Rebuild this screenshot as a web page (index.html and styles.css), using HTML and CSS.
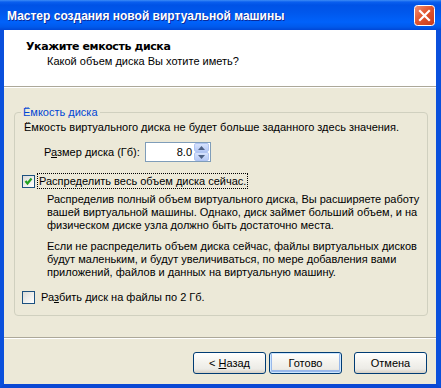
FILE: index.html
```html
<!DOCTYPE html>
<html lang="ru">
<head>
    <meta charset="UTF-8">
    <title>Мастер создания новой виртуальной машины</title>
    <link rel="stylesheet" href="styles.css">
</head>
<body>
    <div class="window">
        <div class="titlebar">
            <span class="title">Мастер создания новой виртуальной машины</span>
            <span class="close">
                <svg width="21" height="21" viewBox="0 0 21 21">
                    <defs>
                        <linearGradient id="closeBg" x1="0" y1="0" x2="1" y2="1">
                            <stop offset="0" stop-color="#F0937A"/>
                            <stop offset="0.45" stop-color="#E2572F"/>
                            <stop offset="1" stop-color="#C6391A"/>
                        </linearGradient>
                    </defs>
                    <rect x="0.5" y="0.5" width="20" height="20" rx="3" fill="url(#closeBg)" stroke="#FFFFFF"/>
                    <path d="M6 6 L15 15 M15 6 L6 15" stroke="#FFFFFF" stroke-width="2.2" stroke-linecap="square"/>
                </svg>
            </span>
        </div>

        <div class="frame">
            <div class="header">
                <div class="header-title">Укажите емкость диска</div>
                <div class="header-sub">Какой объем диска Вы хотите иметь?</div>
            </div>

            <div class="content">
                <fieldset class="group">
                    <legend>Ёмкость диска</legend>
                    <p class="limit">Ёмкость виртуального диска не будет больше заданного здесь значения.</p>

                    <div class="size-row">
                        <span class="size-label">Р<u>а</u>змер диска (Гб):</span>
                        <div class="spin">
                            <span class="spin-value">8.0</span>
                            <div class="spin-buttons">
                                <span class="spin-btn">
                                    <svg width="7" height="4" viewBox="0 0 7 4"><path d="M0 4 L3.5 0 L7 4 Z" fill="#4D6185"/></svg>
                                </span>
                                <span class="spin-btn">
                                    <svg width="7" height="4" viewBox="0 0 7 4"><path d="M0 0 L3.5 4 L7 0 Z" fill="#4D6185"/></svg>
                                </span>
                            </div>
                        </div>
                    </div>

                    <div class="check-row first">
                        <span class="checkbox">
                            <svg width="11" height="11" viewBox="0 0 11 11"><path d="M2.5 5 L4.5 7.5 L8.5 2.5" fill="none" stroke="#21A121" stroke-width="2.2"/></svg>
                        </span>
                        <span class="check-label focused">Распределить весь объем диска сейчас.</span>
                    </div>

                    <p class="note">Распределив полный объем виртуального диска, Вы расширяете работу<br>вашей виртуальной машины. Однако, диск займет больший объем, и на<br>физическом диске узла должно быть достаточно места.</p>
                    <p class="note second">Если не распределить объем диска сейчас, файлы виртуальных дисков<br>будут маленьким, и будут увеличиваться, по мере добавления вами<br>приложений, файлов и данных на виртуальную машину.</p>

                    <div class="check-row last">
                        <span class="checkbox"></span>
                        <span class="check-label">Ра<u>з</u>бить диск на файлы по 2 Гб.</span>
                    </div>
                </fieldset>
            </div>

            <div class="footer">
                <button class="btn">&lt; <u>Н</u>азад</button>
                <button class="btn default">Готово</button>
                <button class="btn cancel">Отмена</button>
            </div>
        </div>
    </div>
</body>
</html>
```

FILE: styles.css
```css
body {
    margin: 0;
    background: #ffffff;
    font-family: "Liberation Sans", "DejaVu Sans", sans-serif;
    font-size: 11px;
    color: #000;
}

.window {
    width: 441px;
    height: 388px;
    display: flex;
    flex-direction: column;
}

.titlebar {
    height: 30px;
    display: flex;
    align-items: center;
    justify-content: space-between;
    padding: 0 6px 0 7px;
    background: linear-gradient(to bottom,
        #3D8CF5 0px, #0A5FEF 2px, #0052E6 5px, #0057EC 12px,
        #0062FB 22px, #0059EB 27px, #0047D6 30px);
    color: #fff;
}

.title {
    font-size: 12px;
    font-weight: bold;
    text-shadow: 1px 1px 0 #0A2A9A;
    padding-top: 1px;
}

.close {
    display: flex;
    width: 21px;
    height: 21px;
}

.frame {
    flex: 1;
    display: flex;
    flex-direction: column;
    background: #ECE9D8;
    border-left: 4px solid #0A50DC;
    border-right: 5px solid #0A50DC;
    border-bottom: 4px solid #0A48D4;
}

.header {
    height: 57px;
    padding: 10px 0 0 22px;
    box-sizing: border-box;
    background: #fff;
    border-bottom: 1px solid #ACA899;
    box-shadow: 0 1px 0 #fff;
    line-height: 13px;
}

.header-title {
    font-family: "DejaVu Sans", sans-serif;
    font-weight: bold;
    letter-spacing: -0.4px;
}

.header-sub {
    margin: 2px 0 0 21px;
}

.content {
    padding: 19px 11px 0 10px;
}

.group {
    margin: 0;
    padding: 2px 8px 10px 7px;
    border: 1px solid #D0D0BF;
    border-radius: 4px;
    line-height: 13px;
}

.group legend {
    color: #0046D5;
    padding: 0 2px;
    margin-left: -1px;
    line-height: 13px;
}

.limit {
    margin: 0 0 0 2px;
}

.size-row {
    display: flex;
    align-items: center;
    margin: 8px 0 0 22px;
    height: 20px;
}

.size-label {
    width: 101px;
}

.spin {
    width: 66px;
    height: 20px;
    box-sizing: border-box;
    border: 1px solid #7F9DB9;
    background: #fff;
    display: flex;
    align-items: center;
    justify-content: flex-end;
}

.spin-value {
    padding-right: 2px;
}

.spin-buttons {
    display: flex;
    flex-direction: column;
    margin-right: 1px;
}

.spin-btn {
    width: 15px;
    height: 9px;
    box-sizing: border-box;
    display: flex;
    align-items: center;
    justify-content: center;
    background: linear-gradient(to bottom, #D7E3FD, #B7CAF6);
    border: 1px solid #B1C5F3;
    border-radius: 2px;
}

.check-row {
    display: flex;
    align-items: center;
    height: 16px;
}

.check-row.first {
    margin-top: 11px;
}

.check-row.last {
    margin-top: 10px;
}

.checkbox {
    width: 13px;
    height: 13px;
    box-sizing: border-box;
    border: 1px solid #1C5180;
    background: linear-gradient(135deg, #DCDCD7, #FFFFFF);
    display: flex;
    align-items: center;
    justify-content: center;
}

.check-label {
    margin-left: 4px;
    line-height: 14px;
    padding: 0 1px;
    border: 1px solid transparent;
}

.check-label.focused {
    margin-left: 2px;
    border: 1px dotted #000;
}

.note {
    margin: 4px 0 0 25px;
    white-space: nowrap;
}

.note.second {
    margin-top: 8px;
}

.footer {
    margin-top: 21px;
    border-top: 1px solid #ACA899;
    box-shadow: inset 0 1px 0 #fff;
    padding: 14px 9px 9px 0;
    display: flex;
    justify-content: flex-end;
}

.btn {
    width: 73px;
    height: 22px;
    margin-left: 3px;
    font-family: inherit;
    font-size: 11px;
    color: #000;
    border: 1px solid #003C74;
    border-radius: 3px;
    background: linear-gradient(to bottom, #FFFFFF 0%, #F4F3EE 45%, #ECEBE6 80%, #D6D0C5 100%);
    padding: 0;
}

.btn.default {
    box-shadow: inset 0 0 0 1px #CEE7FF, inset 0 -1px 0 2px #98B8EA;
}

.btn.cancel {
    margin-left: 12px;
}
```
